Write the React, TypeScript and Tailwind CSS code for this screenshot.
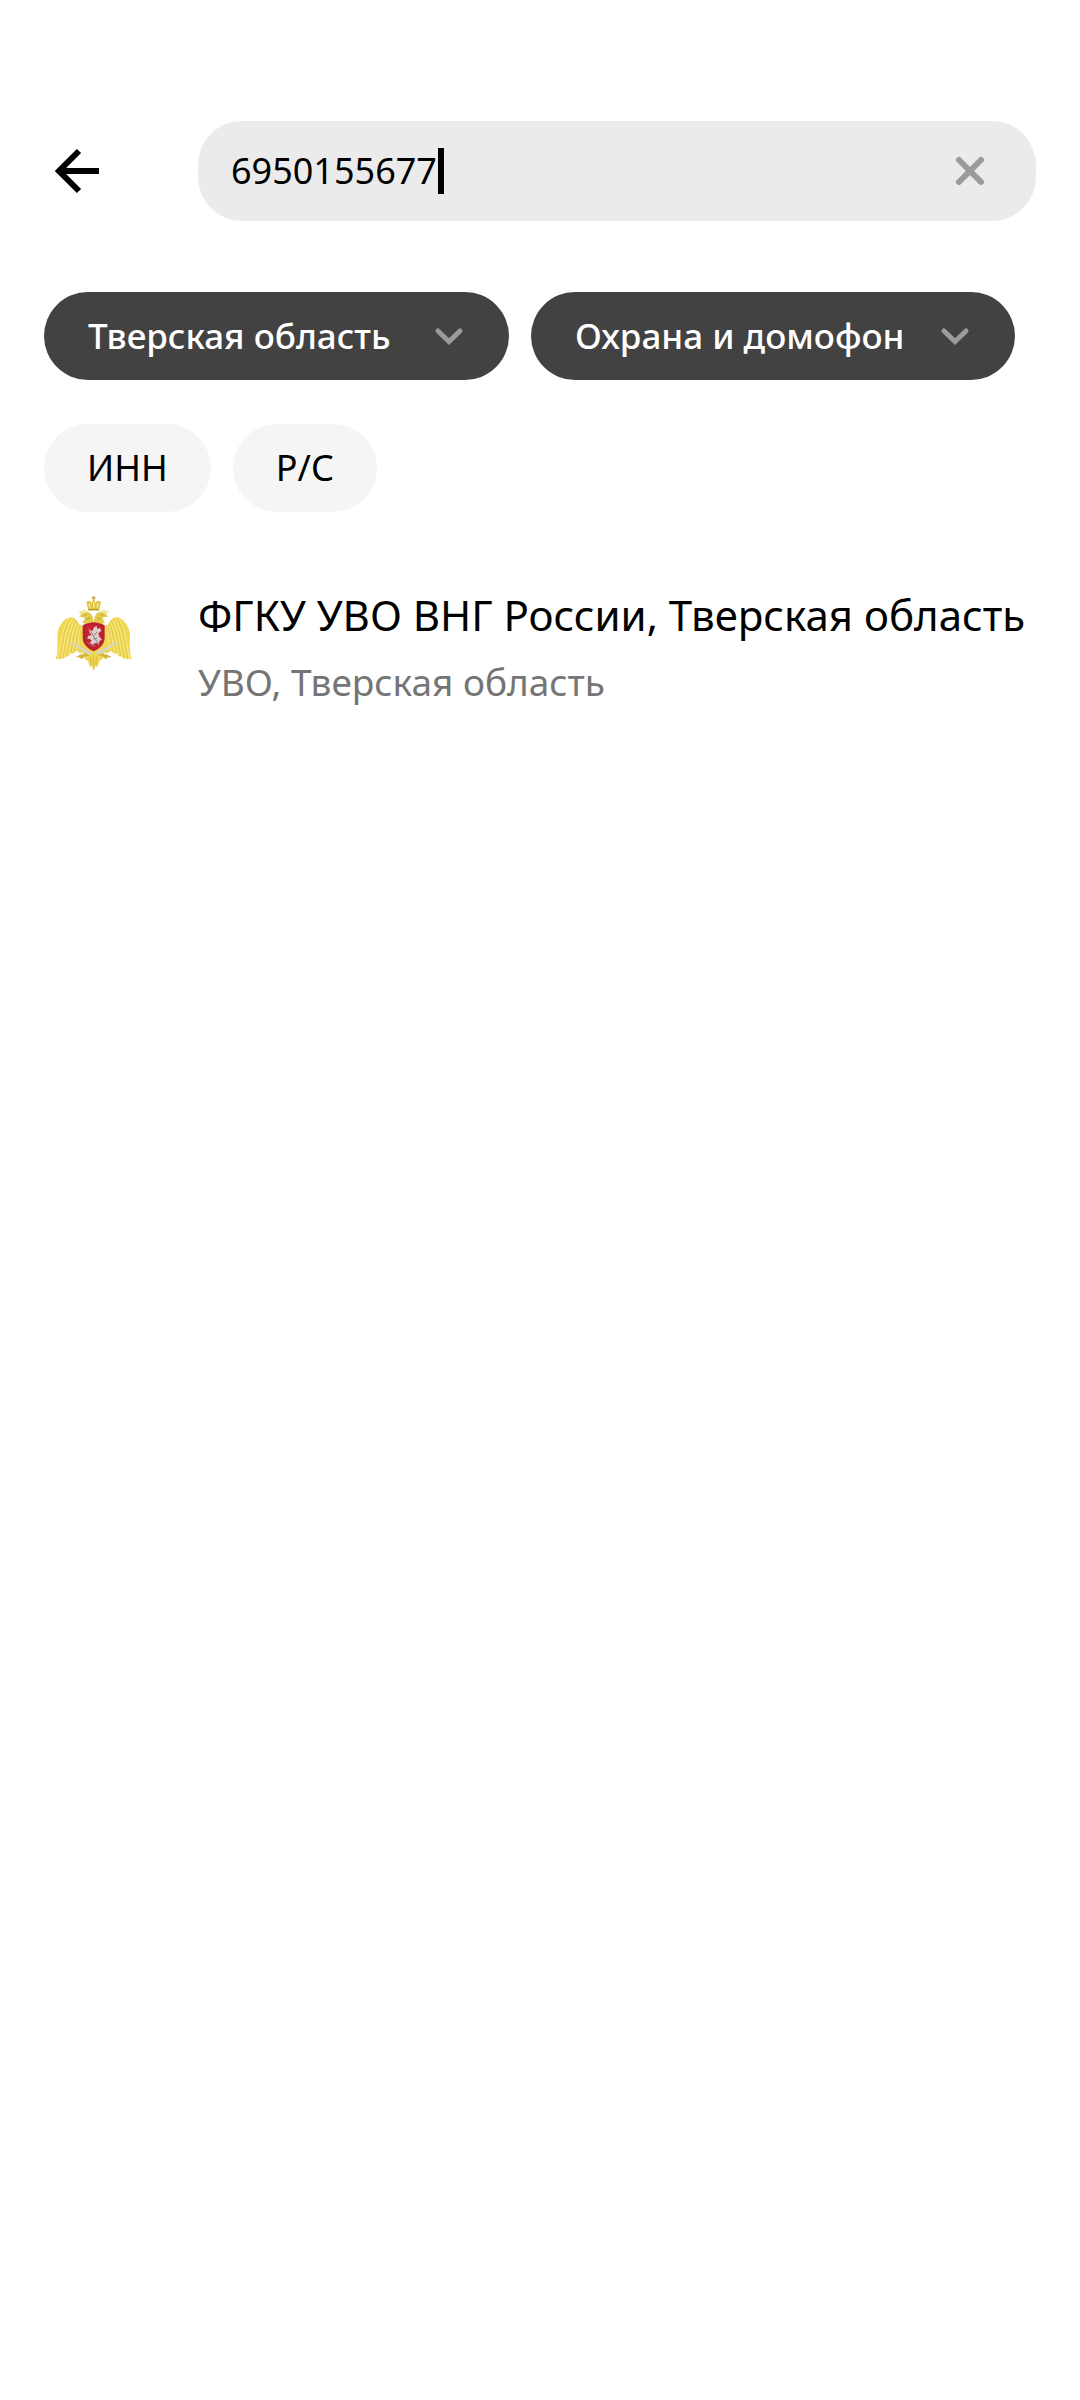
import { useState } from "react";

function Chevron() {
  return (
    <svg
      aria-hidden="true"
      className="pointer-events-none absolute right-[44px] h-[22px] w-[32px]"
      viewBox="0 0 32 22"
      fill="none"
      stroke="#9b9b9b"
      strokeWidth="5"
      strokeLinecap="round"
    >
      <path d="M5 6 L16 16.5 L27 6" />
    </svg>
  );
}

function FilterSelect({ label, value, width }: { label: string; value: string; width: string }) {
  return (
    <div className={`relative flex h-[88px] items-center ${width}`}>
      <select
        aria-label={label}
        className="h-full w-full appearance-none rounded-[44px] bg-[#424242] pr-[96px] pl-[44px] text-[35px] font-medium text-white"
      >
        <option>{value}</option>
      </select>
      <Chevron />
    </div>
  );
}

function EmblemHalf() {
  return (
    <g>
      <path
        d="M104 106 C96 110 88 106 84 97 C78 86 70 81 59 82 C40 88 25 108 22 134 C23 165 24 184 17 209 L26 204 L27 210 L36 204 L40 207 L48 199 L54 200 L61 190 L70 191 L80 182 L90 190 L116 184 L124 140 Z"
        fill="#efd653"
      />
      <path
        d="M58 86 C36 110 34 160 24 202 M66 88 C46 118 44 162 34 200 M73 92 C54 126 54 164 44 197 M79 100 C64 130 64 166 55 192 M84 108 C74 136 76 164 66 186 M90 114 C84 138 88 162 78 178"
        stroke="#f6e680"
        strokeWidth="4"
        fill="none"
      />
      <path
        d="M60 88 C40 112 38 162 29 202 M70 91 C50 120 49 162 39 200 M76 97 C60 128 59 164 50 194 M82 104 C70 132 70 166 61 188 M88 112 C80 138 82 162 73 182"
        stroke="#e0c440"
        strokeWidth="2"
        fill="none"
      />
      <path
        d="M131 100 L112 104 L98 98 C97 94 103 90 105 84 L96 81 L88 80 L92 74 C98 66 110 64 119 68 C126 72 130 84 131 100 Z"
        fill="#e3cb4d"
      />
      <path d="M90 72 L87 60 L95 64 L100 57 L106 63 L113 60 L112 66 Z" fill="#f1e6a0" />
      <path d="M101 76 L110 74 M108 88 L120 84" stroke="#bda13a" strokeWidth="3" />
      <path d="M54 155 L66 157 L128 190 L114 193 Z" fill="#d6d3cc" />
      <path d="M76 202 L90 194 L106 190 L118 196 L104 200 L94 208 L88 202 Z" fill="#d3b640" />
    </g>
  );
}

function Emblem() {
  return (
    <svg role="img" aria-label="Эмблема" className="h-[88px] w-[88px]" viewBox="0 0 264 264">
      <path d="M98 176 L164 176 L158 206 L148 214 L143 230 L136 229 L131 244 L126 229 L119 230 L114 214 L104 206 Z" fill="#efd653" />
      <path d="M122 200 L124 224 M131 200 V236 M140 200 L138 224" stroke="#d8bb3d" strokeWidth="3" />
      <EmblemHalf />
      <g transform="translate(262 0) scale(-1 1)">
        <EmblemHalf />
      </g>
      <path d="M109 36 C114 31 121 33 126 38 L129 30 L133 30 L136 38 C141 33 148 31 153 36 L147 61 L115 61 Z" fill="#dfc341" />
      <path d="M129 18 h4 v4 h4 v4 h-4 v6 h-4 v-6 h-4 v-4 h4 Z" fill="#cba92e" />
      <path d="M117 40 L121 53 M131 37 V53 M145 40 L141 53" stroke="#f9efae" strokeWidth="4" />
      <path d="M115 59 H147" stroke="#b9982c" strokeWidth="4" />
      <path d="M131 97 C140 98 155 101 164 106 V144 C163 163 150 176 131 184 C112 176 99 163 98 144 V106 C107 101 122 98 131 97 Z" fill="#c8222e" />
      <path d="M131 102 C140 103 152 105 159 109 V144 C158 160 148 171 131 178 C114 171 104 160 103 144 V109 C110 105 122 103 131 102 Z" fill="none" stroke="#a82230" strokeWidth="3" />
      <path
        d="M132 112 L140 108 L142 117 L150 114 L154 122 L145 130 L148 140 L156 149 L148 153 L146 163 L137 158 L129 164 L120 158 L125 151 L118 146 L112 147 L114 138 L125 135 L118 127 L117 118 L127 123 Z"
        fill="#dccdcd"
      />
      <path d="M116 114 L147 166 M141 126 L131 137 M129 147 L142 145 M112 158 L135 169" stroke="#9a8085" strokeWidth="3" />
    </svg>
  );
}

export default function App() {
  const [query, setQuery] = useState("6950155677");
  return (
    <main className="min-h-screen bg-white px-[44px] pt-[121px] font-['Noto_Sans',sans-serif] text-black">
      <header className="flex h-[100px] items-center">
        <button type="button" aria-label="Назад" className="mr-[88px] flex h-[66px] w-[66px] items-center justify-center">
          <svg className="h-[46px] w-[46px]" viewBox="0 0 46 46" fill="none" stroke="#000" strokeWidth="6">
            <path d="M25 3 L5 23 L25 43 M5 23 H45" />
          </svg>
        </button>
        <div className="flex h-full min-w-0 flex-1 items-center rounded-[44px] bg-[#ebebeb] pr-[50px] pl-[33px]">
          <input
            aria-label="Поиск"
            className="field-sizing-content bg-transparent text-[36px] leading-[46px] outline-none"
            value={query}
            onChange={(e) => setQuery(e.target.value)}
          />
          <span aria-hidden="true" className="ml-px h-[46px] w-[6px] bg-black" />
          <button type="button" aria-label="Очистить" onClick={() => setQuery("")} className="ml-auto">
            <svg className="h-[32px] w-[32px]" viewBox="0 0 32 32" fill="none" stroke="#9b9b9b" strokeWidth="6" strokeLinecap="round">
              <path d="M5 5 L27 27 M27 5 L5 27" />
            </svg>
          </button>
        </div>
      </header>

      <div className="mt-[71px] flex gap-[22px]">
        <FilterSelect label="Регион" value="Тверская область" width="w-[465px]" />
        <FilterSelect label="Категория" value="Охрана и домофон" width="w-[484px]" />
      </div>

      <div className="mt-[44px] flex gap-[22px] text-[36px]">
        <button type="button" className="h-[88px] rounded-[44px] bg-[#f5f5f5] px-[43px]">
          ИНН
        </button>
        <button type="button" className="h-[88px] rounded-[44px] bg-[#f5f5f5] px-[43px]">
          Р/С
        </button>
      </div>

      <ul className="mt-[75px]">
        <li>
          <a href="#company" className="flex items-start gap-[60px] pl-[6px]">
            <span className="mt-[3px] shrink-0">
              <Emblem />
            </span>
            <span className="flex min-w-0 flex-col">
              <span className="text-[42px] leading-[56px] whitespace-nowrap">ФГКУ УВО ВНГ России, Тверская область</span>
              <span className="mt-[14px] text-[37px] leading-[50px] text-[#757575]">УВО, Тверская область</span>
            </span>
          </a>
        </li>
      </ul>
    </main>
  );
}
